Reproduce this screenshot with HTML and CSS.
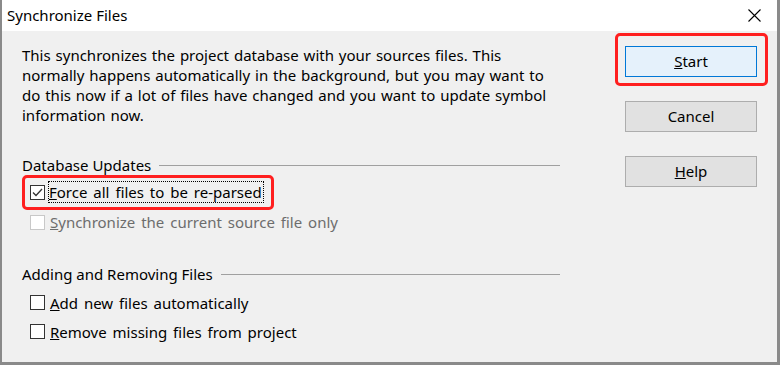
FILE: index.html
```html
<!DOCTYPE html>
<html lang="en">
<head>
<meta charset="UTF-8">
<meta name="viewport" content="width=device-width, initial-scale=1.0">
<title>Synchronize Files</title>
<link rel="stylesheet" href="styles.css">
</head>
<body>

<div class="window">
    <div class="titlebar">
        <span class="title">Synchronize Files</span>
        <svg class="close" width="13" height="13" viewBox="0 0 13 13">
            <path d="M0.5 0.5 L12.5 12.5 M12.5 0.5 L0.5 12.5" stroke="#000" stroke-width="1.1" fill="none"/>
        </svg>
    </div>

    <div class="content">
        <div class="main">
            <p class="intro">
                This synchronizes the project database with your sources files. This<br>
                normally happens automatically in the background, but you may want to<br>
                do this now if a lot of files have changed and you want to update symbol<br>
                information now.
            </p>

            <div class="group">
                <div class="group-title"><span>Database Updates</span><div class="rule"></div></div>
                <div class="row">
                    <span class="marked">
                        <span class="box checked">
                            <svg width="13" height="13" viewBox="0 0 13 13"><path d="M2 6.5 L5 9.5 L11 3" stroke="#333" stroke-width="1.3" fill="none"/></svg>
                        </span>
                        <span class="label focus"><u>F</u>orce all files to be re-parsed</span>
                        <span class="highlight"></span>
                    </span>
                </div>
                <div class="row disabled">
                    <span class="box"></span>
                    <span class="label"><u>S</u>ynchronize the current source file only</span>
                </div>
            </div>

            <div class="group second">
                <div class="group-title"><span>Adding and Removing Files</span><div class="rule"></div></div>
                <div class="row">
                    <span class="box"></span>
                    <span class="label"><u>A</u>dd new files automatically</span>
                </div>
                <div class="row">
                    <span class="box"></span>
                    <span class="label"><u>R</u>emove missing files from project</span>
                </div>
            </div>
        </div>

        <div class="buttons">
            <button class="btn default" type="button"><u>S</u>tart<span class="highlight"></span></button>
            <button class="btn" type="button">Cancel</button>
            <button class="btn" type="button"><u>H</u>elp</button>
        </div>
    </div>
</div>

</body>
</html>
```

FILE: styles.css
```css
body {
    margin: 0;
    font-family: "Noto Sans", "Noto Sans CJK SC", sans-serif;
    font-size: 15px;
    color: #000;
    background-color: #f0f0f0;
}

.window {
    width: 780px;
    height: 365px;
    box-sizing: border-box;
    border: 3px solid #8a8a8a;
    border-top: none;
    border-left-width: 2px;
    background-color: #f0f0f0;
    display: flex;
    flex-direction: column;
}

.titlebar {
    height: 31px;
    background-color: #fff;
    display: flex;
    align-items: center;
    justify-content: space-between;
    padding: 0 16px 0 5px;
}

.title {
    font-size: 15px;
    padding-bottom: 2px;
}

.close {
    display: block;
}

.content {
    flex: 1;
    display: flex;
    justify-content: space-between;
}

.main {
    width: 538px;
    padding: 14px 0 0 20px;
}

.intro {
    margin: 0;
    line-height: 20px;
    word-spacing: 1px;
}

.group {
    margin-top: 30px;
}

.group.second {
    margin-top: 27px;
}

.group-title {
    height: 20px;
    display: flex;
    align-items: center;
}

.rule {
    flex: 1;
    height: 1px;
    background-color: #a0a0a0;
    margin-left: 8px;
}

.row {
    height: 30px;
    display: flex;
    align-items: center;
    padding-left: 8px;
}

.group .row:first-of-type {
    margin-top: 2px;
}

.group .group-title + .row {
    margin-top: 2px;
}

.second .row {
    height: 29px;
}

.second .group-title + .row {
    margin-top: 4px;
}

.marked {
    position: relative;
    display: flex;
    align-items: center;
}

.box {
    width: 13px;
    height: 13px;
    border: 1px solid #333;
    background-color: #fff;
    display: flex;
    align-items: center;
    justify-content: center;
    margin-right: 5px;
}

.label {
    line-height: 20px;
    word-spacing: 2px;
}

.focus {
    outline: 1px dotted #000;
    outline-offset: 0;
    padding: 0 1px 0 0;
    margin-left: -1px;
}

.disabled .box {
    border-color: #c8c8c8;
}

.disabled .label {
    color: #6d6d6d;
}

.highlight {
    position: absolute;
    border: 3px solid #ff1f1f;
    border-radius: 5px;
    pointer-events: none;
}

.marked .highlight {
    top: -7px;
    bottom: -8px;
    left: -8px;
    right: -11px;
}

.buttons {
    display: flex;
    flex-direction: column;
    gap: 24px;
    padding: 15px 20px 0 0;
}

.btn {
    position: relative;
    width: 132px;
    height: 31px;
    font-family: inherit;
    font-size: 15px;
    color: #000;
    background-color: #e1e1e1;
    border: 1px solid #adadad;
    padding: 0 0 2px;
}

.btn.default {
    background-color: #e5f1fb;
    border-color: #0078d7;
}

.btn .highlight {
    top: -14px;
    bottom: -10px;
    left: -11px;
    right: -12px;
}
```
